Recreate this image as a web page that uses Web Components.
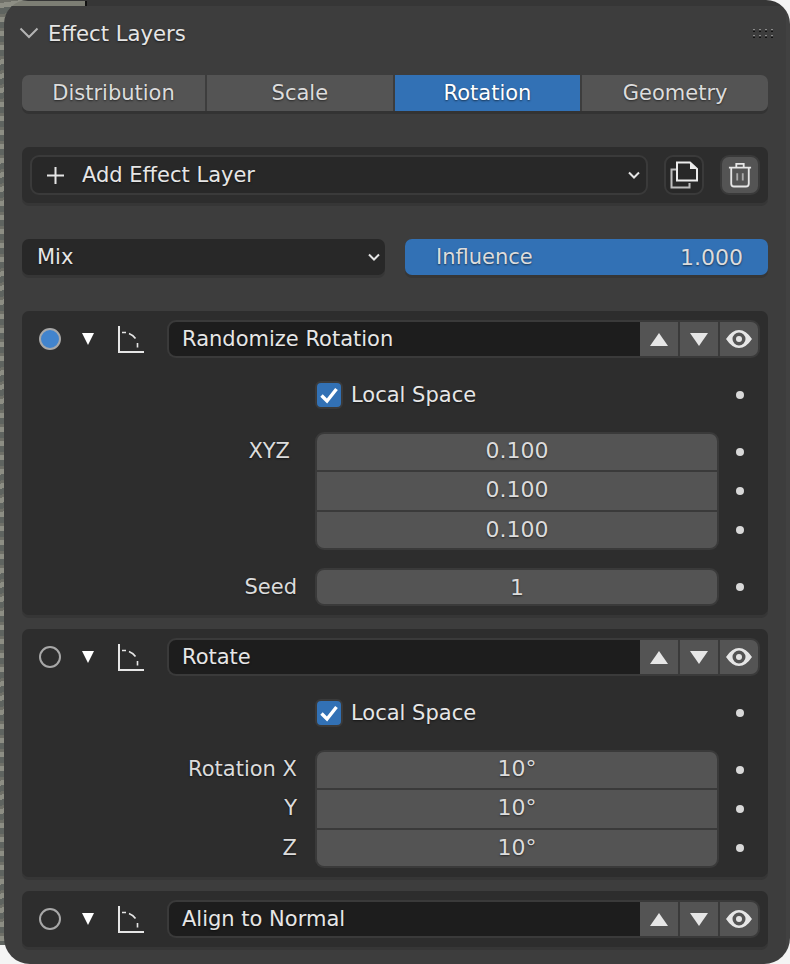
<!DOCTYPE html>
<html>
<head>
<meta charset="utf-8">
<style>
  html, body { margin: 0; height: 964px; overflow: hidden; }
  body {
    font-family: "DejaVu Sans", sans-serif;
    color: #e6e6e6;
    background:
      repeating-linear-gradient(172deg, #6f7068 0 3px, #8d8e84 3px 8px, #5f6460 8px 14px) 0 0 / 30px 945px no-repeat,
      #f4f4f4;
  }
</style>
</head>
<body>
<bl-panel title="Effect Layers">
  <bl-tabs items="Distribution,Scale,Rotation,Geometry" active="Rotation"></bl-tabs>
  <bl-add-bar></bl-add-bar>
  <bl-blend-row></bl-blend-row>
  <bl-layer name="Randomize Rotation" active>
    <bl-props local rows="XYZ:0.100,:0.100,:0.100"></bl-props>
    <bl-props rows="Seed:1" style="margin-top:18px"></bl-props>
  </bl-layer>
  <bl-layer name="Rotate" style="margin-top:14px">
    <bl-props local rows="Rotation X:10°,Y:10°,Z:10°"></bl-props>
  </bl-layer>
  <bl-layer name="Align to Normal" style="margin-top:14px"></bl-layer>
</bl-panel>

<script>
const TEXT = `font-size: 21px; color: #e6e6e6; text-shadow: 0 1px 2px rgba(0,0,0,.55); white-space: nowrap;`;

const CHEVRON = `<svg width="14" height="10" viewBox="0 0 14 10"><path d="M2 2.5 7 7.5 12 2.5" fill="none" stroke="#e6e6e6" stroke-width="2"/></svg>`;

class BlPanel extends HTMLElement {
  constructor() {
    super();
    this.attachShadow({ mode: "open" });
  }
  connectedCallback() {
    this.shadowRoot.innerHTML = `
      <style>
        :host {
          display: block; height: 964px; margin-left: 4px; box-sizing: border-box; border-radius: 24px 24px 26px 26px;
          font-family: "DejaVu Sans", sans-serif;
          background:
            linear-gradient(#7d7e74, #7d7e74) 0 1px / 81px 5px no-repeat,
            linear-gradient(#111, #111) 81px 1px / 2px 5px no-repeat,
            linear-gradient(#363636, #363636) 0 0 / 100% 6px no-repeat,
            linear-gradient(#414141, #414141) 100% 0 / 4px 100% no-repeat,
            #3d3d3d;
        }
        header { height: 75px; display: flex; align-items: center; padding-left: 15px; box-sizing: border-box; padding-bottom: 9px; }
        header svg.arrow { width: 20px; height: 12px; margin-right: 9px; }
        h1 { margin: 0; font-weight: 400; ${TEXT} font-size: 21.2px; }
        .grip { margin-left: auto; margin-right: 16px; display: flex; }
        .body { padding: 0 18px 0 18px; margin-right: 4px; }
      </style>
      <header>
        <svg class="arrow" viewBox="0 0 20 12"><path d="M1.5 1.5 10 10 18.5 1.5" fill="none" stroke="#b4b4b4" stroke-width="2"/></svg>
        <h1>${this.getAttribute("title")}</h1>
        <span class="grip"><svg width="21" height="9" viewBox="0 0 21 9">
          <path d="M0 0h2v1.500H0zM6 0h2v1.500H6zM12 0h2v1.500h-2zM18 0h2v1.500h-2zM0 6h2v1.500H0zM6 6h2v1.500H6zM12 6h2v1.500h-2zM18 6h2v1.500h-2z" fill="#8a8a8a"/>
          <path d="M0 1.500h2V3H0zM6 1.500h2V3H6zM12 1.500h2V3h-2zM18 1.500h2V3h-2zM0 7.500h2V9H0zM6 7.500h2V9H6zM12 7.500h2V9h-2zM18 7.500h2V9h-2z" fill="#111"/>
        </svg></span>
      </header>
      <div class="body"><slot></slot></div>`;
  }
}

class BlTabs extends HTMLElement {
  constructor() {
    super();
    this.attachShadow({ mode: "open" });
  }
  connectedCallback() {
    const active = this.getAttribute("active");
    const tabs = this.getAttribute("items").split(",").map((t) =>
      `<div class="tab ${t === active ? "on" : ""}">${t}</div>`).join("");
    this.shadowRoot.innerHTML = `
      <style>
        :host { display: flex; gap: 2px; height: 36px; border-radius: 7px; overflow: hidden; box-shadow: 0 3px 0 #333; }
        .tab { flex: 1 1 0; background: #545454; display: flex; align-items: center; justify-content: center; ${TEXT} color: #dcdcdc; }
        .tab:first-of-type { flex: 0 0 183px; }
        .tab.on { background: #3271b5; color: #fff; }
      </style>
      ${tabs}`;
  }
}

class BlAddBar extends HTMLElement {
  constructor() {
    super();
    this.attachShadow({ mode: "open" });
  }
  connectedCallback() {
    this.shadowRoot.innerHTML = `
      <style>
        :host { display: flex; align-items: center; margin-top: 36px; height: 56px; padding: 0 8px; box-sizing: border-box; background: #2d2d2d; border-radius: 7px; box-shadow: 0 3px 0 #363636; }
        .menu { flex: 1; height: 40px; box-sizing: border-box; border: 2px solid #3a3a3a; border-radius: 9px; background: #282828; display: flex; align-items: center; padding: 0 5px 0 14px; ${TEXT} }
        .menu svg.plus { margin-right: 17px; }
        .menu .chev { margin-left: auto; display: flex; }
        .btn { width: 40px; height: 40px; box-sizing: border-box; border: 2px solid #3a3a3a; border-radius: 9px; background: #282828; margin-left: 16px; display: flex; align-items: center; justify-content: center; }
        .btn.light { background: #545454; }
      </style>
      <div class="menu">
        <svg class="plus" width="19" height="19" viewBox="0 0 19 19"><path d="M9.5 1v17M1 9.5h17" stroke="#e6e6e6" stroke-width="2"/></svg>
        Add Effect Layer
        <span class="chev">${CHEVRON}</span>
      </div>
      <div class="btn">
        <svg width="30" height="30" viewBox="0 0 30 30" fill="none">
          <path d="M7 9.5H2.5V27.5H20.5V23" stroke="#bdbdbd" stroke-width="2"/>
          <path d="M8 2.5H21L28 9V20.5H8Z" stroke="#ececec" stroke-width="2"/>
          <path d="M21 2 28.5 9H21Z" fill="#ececec"/>
        </svg>
      </div>
      <div class="btn light">
        <svg width="24" height="26" viewBox="0 0 26 28" fill="none" stroke="#e6e6e6" stroke-width="2">
          <path d="M1 6H25M9 6V2H17V6M3.500 6V23.500Q3.500 26.500 6.500 26.500H19.500Q22.500 26.500 22.500 23.500V6"/>
          <path d="M10 12V20M16 12V20" stroke="#aaa"/>
        </svg>
      </div>`;
  }
}

class BlBlendRow extends HTMLElement {
  constructor() {
    super();
    this.attachShadow({ mode: "open" });
  }
  connectedCallback() {
    this.shadowRoot.innerHTML = `
      <style>
        :host { display: grid; grid-template-columns: 1fr 1fr; gap: 20px; margin-top: 36px; height: 36px; }
        div { box-sizing: border-box; border-radius: 7px; display: flex; align-items: center; box-shadow: 0 3px 0 #363636; ${TEXT} }
        .mix { background: #282828; padding: 0 4px 0 15px; }
        .mix span { margin-left: auto; display: flex; }
        .inf { background: #3271b5; padding: 0 25px 0 31px; color: #dcdcdc; }
        .inf b { margin-left: auto; font-weight: 400; font-size: 22px; }
      </style>
      <div class="mix">Mix<span>${CHEVRON}</span></div>
      <div class="inf">Influence<b>1.000</b></div>`;
  }
}

class BlLayer extends HTMLElement {
  constructor() {
    super();
    this.attachShadow({ mode: "open" });
  }
  connectedCallback() {
    const on = this.hasAttribute("active");
    this.shadowRoot.innerHTML = `
      <style>
        :host { display: block; margin-top: 36px; padding: 9px 0; background: #2d2d2d; border-radius: 7px; box-shadow: 0 3px 0 #363636; }
        .head { display: flex; align-items: center; height: 38px; }
        .radio { width: 18px; height: 18px; border-radius: 50%; border: 2px solid #a8a8a8; margin-left: 17px; background: ${on ? "#4284cd" : "transparent"}; }
        .tri { margin-left: 21px; display: flex; }
        .graph { margin-left: 24px; display: flex; }
        .name { margin-left: 23px; width: 473px; height: 38px; box-sizing: border-box; border: 2px solid #3a3a3a; border-right: 0; border-radius: 9px 0 0 9px; background: #1d1d1d; display: flex; align-items: center; padding-left: 13px; ${TEXT} }
        .tools { display: flex; gap: 2px; width: 120px; height: 38px; background: #3a3a3a; border-radius: 0 9px 9px 0; overflow: hidden; }
        .tools div { flex: 1 1 0; background: #545454; display: flex; align-items: center; justify-content: center; margin: 2px 0; }
        .tools div:last-child { margin-right: 2px; border-radius: 0 7px 7px 0; }
      </style>
      <div class="head">
        <div class="radio"></div>
        <span class="tri"><svg width="12" height="12" viewBox="0 0 12 12"><path d="M0 0H12L6 12Z" fill="#fff"/></svg></span>
        <span class="graph"><svg width="26" height="27" viewBox="0 0 26 27" fill="none" stroke="#e6e6e6">
          <path d="M1 0V26H26" stroke-width="2"/>
          <path d="M4 6.500H8M11 7.500Q15 9 17.500 12.500M19.500 17V21.500" stroke-width="1.600"/>
        </svg></span>
        <div class="name">${this.getAttribute("name")}</div>
        <div class="tools">
          <div><svg width="18" height="13" viewBox="0 0 18 13"><path d="M9 0 18 13H0Z" fill="#e6e6e6"/></svg></div>
          <div><svg width="18" height="13" viewBox="0 0 18 13"><path d="M0 0H18L9 13Z" fill="#e6e6e6"/></svg></div>
          <div><svg width="26" height="18" viewBox="0 0 26 18">
            <path fill-rule="evenodd" fill="#e6e6e6" d="M0 9Q6 0 13 0T26 9Q20 18 13 18T0 9ZM13 2.500A6.500 6.500 0 1 0 13 15.500A6.500 6.500 0 1 0 13 2.500Z"/>
            <circle cx="13" cy="9" r="3" fill="#e6e6e6"/>
          </svg></div>
        </div>
      </div>
      <slot></slot>`;
  }
}

class BlProps extends HTMLElement {
  constructor() {
    super();
    this.attachShadow({ mode: "open" });
  }
  connectedCallback() {
    const rows = this.getAttribute("rows").split(",").map((r) => r.split(":"));
    const tall = rows.length > 1 ? "tall" : "";
    const labels = rows.map(([l]) => `<div class="label ${l === "XYZ" ? "inset" : ""}">${l}</div>`).join("");
    const fields = rows.map(([, v]) => `<div class="field">${v}</div>`).join("");
    const dots = rows.map(() => `<div class="dotcell"><i></i></div>`).join("");
    const local = this.hasAttribute("local") ? `
      <div class="local">
        <span class="box"><svg width="20" height="18" viewBox="0 0 20 18"><path d="M2.500 9.500 8 15 17.500 3" fill="none" stroke="#fff" stroke-width="3.400"/></svg></span>
        <span>Local Space</span>
        <i></i>
      </div>` : "";
    this.shadowRoot.innerHTML = `
      <style>
        :host { display: block; }
        .local { display: flex; align-items: center; height: 26px; margin: 24px 0 24px 293px; ${TEXT} }
        .box { width: 24px; height: 24px; flex: none; border: 2px solid #3a3a3a; border-radius: 6px; background: #3271b5; display: flex; align-items: center; justify-content: center; margin-right: 8px; }
        .local i, .dotcell i { display: block; width: 8px; height: 8px; border-radius: 50%; background: #d8d8d8; }
        .local i { margin-left: auto; margin-right: 24px; }
        .grid { display: grid; grid-template-columns: 293px 404px 1fr; }
        .col { display: flex; flex-direction: column; gap: 2px; padding: 2px 0; box-sizing: border-box; height: 38px; }
        .col.tall { height: 118px; }
        .col > * { flex: 1 1 0; box-sizing: border-box; }
        /* the three stacked rows are not quite the same height in the reference */
        .col.tall > :nth-child(1) { flex: 0 0 35.5px; padding-bottom: 2px; }
        .col.tall > :nth-child(2) { flex: 0 0 38px; padding-bottom: 2px; }
        .col.tall > :nth-child(3) { flex: 0 0 36.5px; }
        .label { display: flex; align-items: center; justify-content: flex-end; padding-right: 18px; ${TEXT} color: #dcdcdc; }
        .label.inset { padding-right: 25px; }
        .fields { padding: 2px; background: #3a3a3a; border-radius: 9px; overflow: hidden; }
        .field { background: #545454; display: flex; align-items: center; justify-content: center; ${TEXT} font-size: 22px; color: #dcdcdc; }
        .field:first-child { border-radius: 7px 7px 0 0; }
        .field:last-child { border-radius: 0 0 7px 7px; }
        .field:only-child { border-radius: 7px; }
        .dots { padding-left: 17px; }
        .dots.tall > * { padding-bottom: 0 !important; }
        .dotcell { display: flex; align-items: center; }
      </style>
      ${local}
      <div class="grid">
        <div class="col ${tall}">${labels}</div>
        <div class="col fields ${tall}">${fields}</div>
        <div class="col dots ${tall}">${dots}</div>
      </div>`;
  }
}

customElements.define("bl-panel", BlPanel);
customElements.define("bl-tabs", BlTabs);
customElements.define("bl-add-bar", BlAddBar);
customElements.define("bl-blend-row", BlBlendRow);
customElements.define("bl-layer", BlLayer);
customElements.define("bl-props", BlProps);
</script>
</body>
</html>
